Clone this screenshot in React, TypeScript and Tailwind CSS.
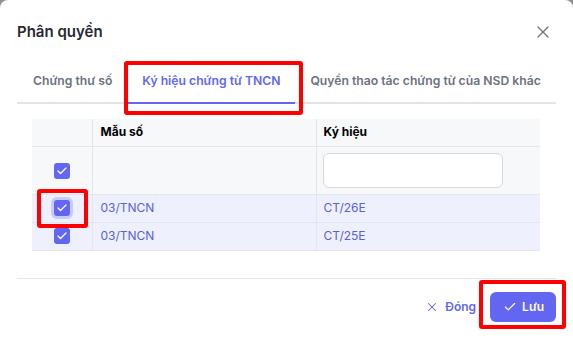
import { Check, X } from "lucide-react";

const ROWS = [
  { id: "r1", mau: "03/TNCN", kyHieu: "CT/26E", focused: true },
  { id: "r2", mau: "03/TNCN", kyHieu: "CT/25E", focused: false },
];

function CheckBox({ focused }: { focused?: boolean }) {
  return (
    <span
      className={`inline-flex size-4 items-center justify-center rounded-[3px] bg-[#6366f1] ${
        focused ? "ring-[3px] ring-[#c7cdfa]" : ""
      }`}
    >
      <Check className="size-3 text-white" strokeWidth={2.5} />
    </span>
  );
}

export default function App() {
  return (
    <div className="h-[345px] w-[573px] overflow-hidden bg-[#8f8f8f] font-['Inter',sans-serif]">
      <div className="relative h-full rounded-t-lg bg-white">
        {/* Header */}
        <div className="flex h-16 items-center justify-between pl-[17px] pr-5">
          <h2 className="text-[15px] font-semibold text-[#262a30]">Phân quyền</h2>
          <button className="flex size-5 items-center justify-center text-[#6b7280]">
            <X className="size-5" strokeWidth={1.5} />
          </button>
        </div>

        {/* Tabs */}
        <div className="mx-[17px] flex whitespace-nowrap border-b-2 border-[#e2e4e8] pl-px text-[12.2px] font-semibold leading-5">
          <button className="shrink-0 px-[15px] pb-[11px] pt-[7px] text-[#6b7280]">Chứng thư số</button>
          <button className="-mb-[2px] shrink-0 border-b-2 border-[#6366f1] px-[15px] pb-[11px] pt-[7px] text-[#6366f1]">
            Ký hiệu chứng từ TNCN
          </button>
          <button className="shrink-0 px-[15px] pb-[11px] pt-[7px] text-[#6b7280]">
            Quyền thao tác chứng từ của NSD khác
          </button>
        </div>

        {/* Table */}
        <div className="ml-8 mt-[15px] w-[508px]">
          <table className="w-full border-collapse text-left text-[12px]">
            <thead>
              <tr className="h-[27px] bg-[#f7f8fa] text-black">
                <th className="w-[60px] border-b border-r border-[#e3e6ea]"></th>
                <th className="w-[224px] border-b border-r border-[#e3e6ea] px-2 font-bold">Mẫu số</th>
                <th className="border-b border-[#e3e6ea] px-[7px] font-bold">Ký hiệu</th>
              </tr>
            </thead>
            <tbody>
              <tr className="h-12 bg-[#f7f8fa]">
                <td className="border-b border-r border-[#e3e6ea] text-center align-middle">
                  <div className="flex justify-center pt-[1px]">
                    <CheckBox />
                  </div>
                </td>
                <td className="border-b border-r border-[#e3e6ea]"></td>
                <td className="border-b border-[#e3e6ea] px-[6px]">
                  <input className="block h-[35px] w-[180px] rounded-md border border-[#d4d7dc] bg-white px-2 outline-none" />
                </td>
              </tr>
              {ROWS.map((r) => (
                <tr key={r.id} className="h-7 bg-[#eef1fd] text-[#5b5fd9]">
                  <td className="border-b border-r border-[#e3e6ea]">
                    <div className="flex justify-center">
                      <CheckBox focused={r.focused} />
                    </div>
                  </td>
                  <td className="border-b border-r border-[#e3e6ea] px-2">{r.mau}</td>
                  <td className="border-b border-[#e3e6ea] px-[7px]">{r.kyHieu}</td>
                </tr>
              ))}
            </tbody>
          </table>
        </div>

        {/* Footer */}
        <div className="mx-[17px] mt-[27px] border-t border-[#e2e6ec]">
          <div className="flex items-center justify-end gap-[14px] pt-[13px]">
            <button className="flex items-center gap-[6px] text-[12px] font-semibold text-[#6366f1]">
              <X className="size-[14px]" strokeWidth={1.75} />
              Đóng
            </button>
            <button className="flex h-[30px] items-center gap-[5px] rounded-md bg-[#6366f1] pl-[13px] pr-[12px] text-[12px] font-semibold text-white">
              <Check className="size-[14px]" strokeWidth={2} />
              Lưu
            </button>
          </div>
        </div>

        {/* Red annotation boxes */}
        <div className="pointer-events-none absolute left-[124px] top-[61px] h-[54px] w-[179px] rounded-[3px] border-4 border-[#ff0000]" />
        <div className="pointer-events-none absolute left-[37px] top-[189px] h-[39px] w-[51px] rounded-[3px] border-4 border-[#ff0000]" />
        <div className="pointer-events-none absolute left-[479px] top-[280px] h-[49px] w-[87px] rounded-[3px] border-4 border-[#ff0000]" />
      </div>
    </div>
  );
}
